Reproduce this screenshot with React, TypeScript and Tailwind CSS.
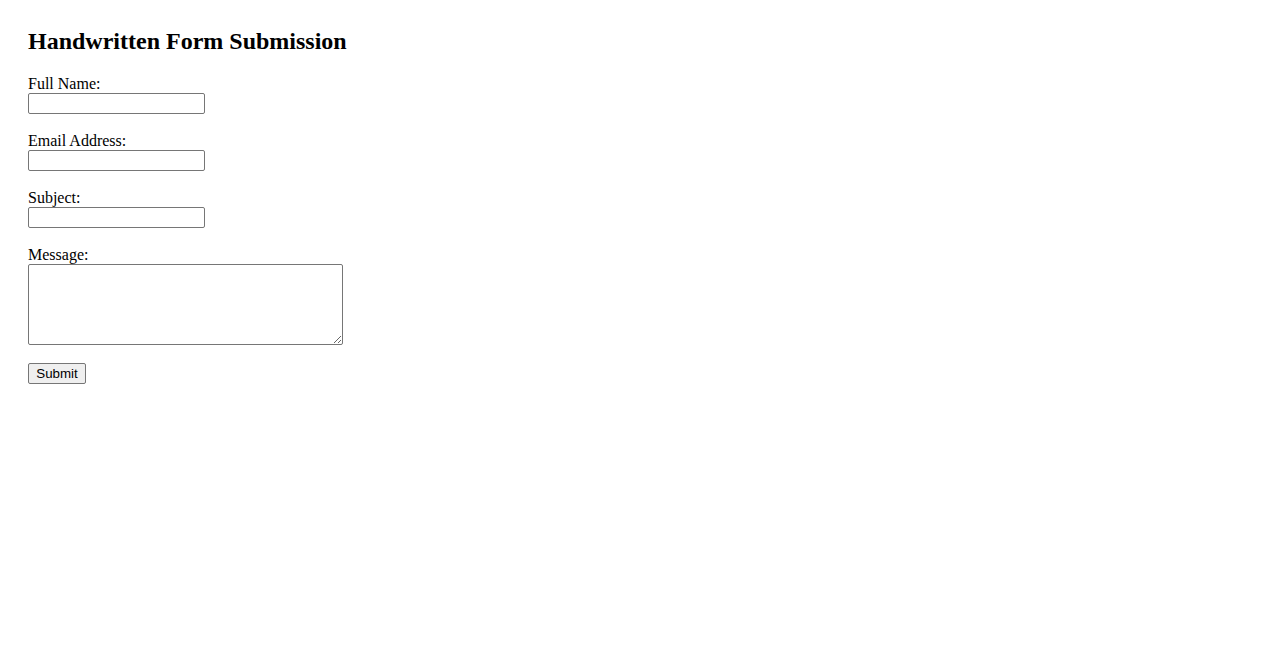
export default function App() {
  const fields = [
    { label: "Full Name:", type: "text" },
    { label: "Email Address:", type: "email" },
    { label: "Subject:", type: "text" },
  ];
  return (
    <div className="min-h-[650px] bg-white p-[28px] text-black font-['Liberation_Serif',serif] text-[16px]">
      <h2 className="m-0 mb-[19px] text-[24px] font-bold leading-[27px]">Handwritten Form Submission</h2>
      <form onSubmit={(e) => e.preventDefault()} className="flex flex-col items-start">
        {fields.map((f) => (
          <div key={f.label} className="mb-[17px] flex flex-col items-start">
            <label className="block leading-[19px]">{f.label}</label>
            <input
              type={f.type}
              className="block h-[21px] w-[177px] rounded-[2px] border border-[#767676] bg-white px-[2px] text-[13.33px] font-['Liberation_Sans',sans-serif] outline-none"
            />
          </div>
        ))}
        <div className="mb-[18px] flex flex-col items-start">
          <label className="block leading-[19px]">Message:</label>
          <textarea className="block h-[81px] w-[315px] rounded-[2px] border border-[#767676] bg-white p-[2px] text-[13.33px] font-['Liberation_Mono',monospace] outline-none resize" />
        </div>
        <button
          type="submit"
          className="h-[21px] w-[58px] rounded-[2px] border border-[#767676] bg-[#efefef] px-[6px] text-[13.33px] leading-[15px] text-black font-['Liberation_Sans',sans-serif]"
        >
          Submit
        </button>
      </form>
    </div>
  );
}
